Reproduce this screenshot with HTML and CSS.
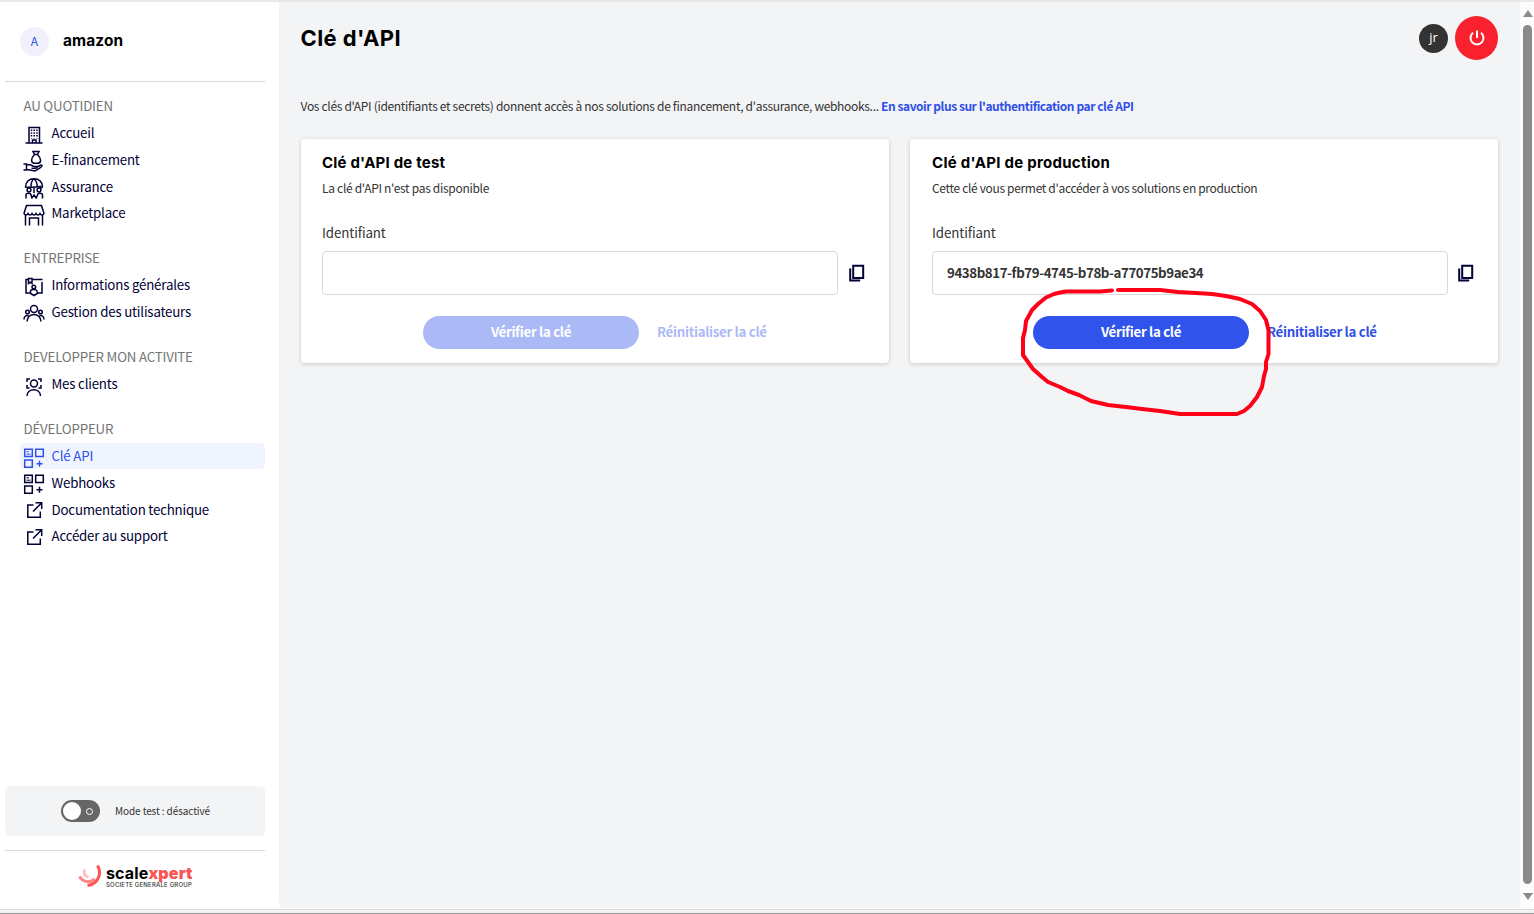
FILE: index.html
```html
<!DOCTYPE html>
<html lang="fr">
<head>
<meta charset="utf-8">
<title>Clé d'API</title>
<link rel="stylesheet" href="styles.css">
</head>
<body>
<svg class="defs" width="0" height="0">
  <symbol id="apps" viewBox="0 0 22 22"><path d="M1.700 2.200h7.600v7.300H1.700zM12.700 2.200h7.600v7.300h-7.600zM1.700 13h7.600v7.300H1.700zM16.500 13.800v6M13.500 16.800h6"/><path stroke-width="1" d="M3.500 4.800h2.500M3.500 7.200h4"/></symbol>
  <symbol id="ext" viewBox="0 0 22 22"><path d="M10.500 5H4.800v12.300h12.500v-5.800M12.500 2.800h6.200V9M18.700 2.800L10 11.500"/></symbol>
  <symbol id="copy" viewBox="0 0 18 20"><path d="M5.200 2.800h10v12.200h-10zM2.200 5.500v12h10"/></symbol>
</svg>
<div class="window">
  <aside class="sidebar">
    <div class="brand"><span class="avatar">A</span><span class="brand-name">amazon</span></div>
    <nav class="menu">
      <section class="group">
        <h3>AU QUOTIDIEN</h3>
        <a class="item"><svg viewBox="0 0 22 22"><path d="M6 19V3.500h10.500V19M2.500 19h17M9.500 19v-3h3.500v3"/><path stroke-dasharray="1.500 1.300" d="M8.500 5.500v9M11.200 5.500v9M14 5.500v9"/></svg><span>Accueil</span></a>
        <a class="item"><svg viewBox="0 0 22 22"><path d="M10 1.500h6l-1.500 3h-3zM11.500 4.500C7.500 8.500 8 13 11 13.200h4c3.500-.2 3.500-4.700-.5-8.700M.5 14h3v6h-3M3.500 14.800h4l3 1.700h3.500c.5 2-2 2-5.500 1.800M14 17l4-2c2 0 1 1.500-1 3l-5 3-8-1.500"/></svg><span>E-financement</span></a>
        <a class="item"><svg viewBox="0 0 22 22"><path d="M2.500 10C2.500 5 6 1.700 11 1.700s8.300 3.300 8.500 7.800c0 1.500-2 1.500-2 0-4 .8-11 .8-15 .5zM8 9.500c0-3.500 1.500-6.500 3-7.500 1.500 1 3 4 3.300 7.500M11 10v6M3 21.500v-3.500c0-2.500 5-2.500 5 0l1 3.500M19.500 21.500v-3.500c0-2.500-5-2.500-5 0l-1.500 3.500M8.500 21.500l2.500-3.500 2.500 3.500"/><circle cx="6" cy="13" r="1.900"/><circle cx="16" cy="13" r="1.900"/></svg><span>Assurance</span></a>
        <a class="item"><svg viewBox="0 0 22 22"><path d="M3.500 1.500h15l2.500 8c-1 2-3 2-4 0-1 2-3 2-4 0-1 2-3 2-4 0-1 2-3 2-4 0-1 2-3 2-4 0zM2.500 11.500v10M19.500 11.500v10M6.500 21.500V14h9v7.500"/></svg><span>Marketplace</span></a>
      </section>
      <section class="group">
        <h3>ENTREPRISE</h3>
        <a class="item"><svg viewBox="0 0 22 22"><path d="M5 3.500H3V17h4l4 2.500L15 17h4V6M9 3.500h10.500M5.500 2.500H9v5L7.200 6.200 5.500 7.500zM7.500 16.500v-1.200c0-2.500 6.500-2.500 6.500 0v1.200"/><circle cx="10.800" cy="11" r="1.800"/></svg><span>Informations générales</span></a>
        <a class="item"><svg viewBox="0 0 22 22"><circle cx="11" cy="7" r="3.500"/><circle cx="4.500" cy="10" r="1.800"/><circle cx="17.500" cy="10" r="1.800"/><path d="M4 19.500c1-9.500 13-9.500 14 0M1 17.500c0-3 2-4.500 4.500-3.700M21 17.500c0-3-2-4.500-4.500-3.700"/></svg><span>Gestion des utilisateurs</span></a>
      </section>
      <section class="group">
        <h3>DEVELOPPER MON ACTIVITE</h3>
        <a class="item"><svg viewBox="0 0 22 22"><circle cx="11" cy="8.500" r="3.500"/><path d="M4 21c0-8.500 13.500-8.500 13.500 0M7 4H4v3M15 4h3v3M4 10v3h2.500M18 10v3h-2.500"/></svg><span>Mes clients</span></a>
      </section>
      <section class="group">
        <h3>DÉVELOPPEUR</h3>
        <a class="item active"><svg><use href="#apps"/></svg><span>Clé API</span></a>
        <a class="item"><svg><use href="#apps"/></svg><span>Webhooks</span></a>
        <a class="item"><svg><use href="#ext"/></svg><span>Documentation technique</span></a>
        <a class="item"><svg><use href="#ext"/></svg><span>Accéder au support</span></a>
      </section>
    </nav>
    <div class="mode"><span class="toggle"><i class="knob"></i><i class="off"></i></span><span class="mode-label">Mode test : désactivé</span></div>
    <div class="logo">
      <svg class="logo-mark" viewBox="0 0 24 24"><path class="m2" d="M1.500 12.500c3 5.500 10 7 15.500 2.500"/><path class="m1" d="M19.500 1.500C24 9 20.500 20.500 9.500 21.500"/><path class="m3" d="M7 5.500c-2 3-.5 7 3.500 7.500"/></svg>
      <div class="logo-text"><span class="wordmark">scale<b>xpert</b></span><span class="tagline">SOCIETE GENERALE GROUP</span></div>
    </div>
  </aside>
  <main class="main">
    <header class="top">
      <h1>Clé d'API</h1>
      <div class="user"><span class="initials">jr</span><span class="power"><svg viewBox="0 0 20 20"><path d="M6 4.800a6.500 6.500 0 1 0 8 0M10 2.500v7.500"/></svg></span></div>
    </header>
    <p class="intro"><span class="intro-text">Vos clés d'API (identifiants et secrets) donnent accès à nos solutions de financement, d'assurance, webhooks...</span> <a>En savoir plus sur l'authentification par clé API</a></p>
    <div class="cards">
      <section class="card">
        <h2>Clé d'API de test</h2>
        <p class="desc">La clé d'API n'est pas disponible</p>
        <label>Identifiant</label>
        <div class="field"><div class="input"></div><svg class="copy"><use href="#copy"/></svg></div>
        <div class="actions disabled"><span class="btn"><span>Vérifier la clé</span></span><span class="link">Réinitialiser la clé</span></div>
      </section>
      <section class="card production">
        <h2>Clé d'API de production</h2>
        <p class="desc">Cette clé vous permet d'accéder à vos solutions en production</p>
        <label>Identifiant</label>
        <div class="field"><div class="input">9438b817-fb79-4745-b78b-a77075b9ae34</div><svg class="copy"><use href="#copy"/></svg></div>
        <div class="actions"><span class="btn"><span>Vérifier la clé</span></span><span class="link">Réinitialiser la clé</span></div>
        <svg class="scribble" viewBox="1010 280 270 145"><path d="M1112 290.500L1100 291.500H1066L1060 292.500L1054 294L1046 297.500L1038 304L1032 310L1026 321L1025 330L1023 338V355L1028 362L1033 369L1042 377L1048 382L1060 387L1068 391L1079 395L1091 401L1108 405L1126 407L1142 409L1160 411L1180 414H1237L1244 411L1250 406L1257 397L1262 387L1264 376L1266 369V362L1268.500 354V330L1266 320L1260 311L1252 304L1240 299L1226 296L1212 294L1196 293L1178 292L1160 290H1118"/></svg>
      </section>
    </div>
  </main>
  <div class="scrollbar"><i class="up"></i><i class="thumb"></i><i class="down"></i></div>
</div>
</body>
</html>
```
FILE: styles.css
```css
* { box-sizing: border-box; }
body { margin: 0; height: 914px; overflow: hidden; background: #f4f4f4; border-bottom: 1px solid #999; font-family: "Noto Sans CJK SC", sans-serif; font-size: 13.300px; color: #333; padding-bottom: 3px; }
h1, h2, h3, p { margin: 0; }
svg { fill: none; stroke: currentColor; flex: none; display: block; }
.defs { position: absolute; }
.window { display: flex; height: 910px; border-top: 2px solid #e9e9ea; border-bottom: 1px solid #dadada; background: #fff; }
.sidebar { width: 279px; padding: 0 14px 0 5px; display: flex; flex-direction: column; }
.brand { height: 80px; border-bottom: 1px solid #d9d9d9; display: flex; align-items: center; gap: 14px; padding-left: 15px; flex: none; }
.avatar { width: 29px; height: 29px; border-radius: 50%; background: #f0f1fb; color: #3050e8; display: grid; place-items: center; font-size: 12px; line-height: 26px; padding-bottom: 2px; }
.brand-name { font: 700 15.400px/20px Inter, sans-serif; color: #000; letter-spacing: .15px; padding-bottom: 1px; }
.menu { display: flex; flex-direction: column; gap: 18.600px; padding: 11px 0 0 15px; letter-spacing: -.2px; }
.group h3 { font-weight: 400; font-size: 13.300px; line-height: 26.800px; height: 26.800px; padding-left: 3.500px; color: #757575; }
.item { display: flex; align-items: center; height: 26.700px; line-height: 26px; gap: 6.500px; padding-left: 3px; color: #010035; border-radius: 5px; }
.item svg { width: 22px; height: 22px; stroke-width: 1.500; margin-top: 3px; }
.item.active { color: #3050e8; background: #f0f4ff; }
.mode { margin-top: auto; height: 50px; background: #f3f4f6; border-radius: 5px; display: flex; align-items: center; padding-left: 56px; gap: 15px; flex: none; }
.toggle { width: 39px; height: 22px; border-radius: 11px; background: #666; display: flex; align-items: center; justify-content: space-between; padding: 0 7px 0 2px; }
.knob { width: 18px; height: 18px; border-radius: 50%; background: #fff; }
.off { width: 7px; height: 7px; border: 1px solid #fff; border-radius: 50%; }
.mode-label { font-size: 10px; letter-spacing: -.1px; padding-bottom: 1px; }
.logo { margin-top: 14px; height: 59px; border-top: 1px solid #d9d9d9; display: flex; gap: 4px; padding: 13px 0 0 73px; flex: none; }
.logo-mark { width: 24px; height: 24px; }
.m1 { stroke: #f95554; stroke-width: 3; }
.m2 { stroke: #fb8987; stroke-width: 3; }
.m3 { stroke: #fdc4c4; stroke-width: 3; }
.logo-text { display: flex; flex-direction: column; font-family: Inter, sans-serif; }
.wordmark { font-weight: 700; font-size: 16px; line-height: 18px; color: #000; letter-spacing: .15px; }
.wordmark b { color: #f95554; }
.tagline { font-size: 6px; line-height: 5px; font-weight: 500; white-space: nowrap; letter-spacing: .2px; }
.main { flex: 1; background: #f3f4f6; border-radius: 0 0 0 5px; padding: 14px 22px 0 21.500px; margin-bottom: 1px; }
.top { display: flex; justify-content: space-between; height: 44px; align-items: center; }
h1 { font: 700 22px/28px Inter, sans-serif; color: #000; letter-spacing: .4px; }
.user { display: flex; align-items: center; gap: 7px; }
.initials { width: 29px; height: 29px; border-radius: 50%; background: #333; color: #fff; display: grid; place-items: center; font: 13px/26px "Open Sans", sans-serif; padding-bottom: 3px; }
.power { width: 43px; height: 44px; border-radius: 50%; background: #f8212d; color: #fff; display: grid; place-items: center; }
.power svg { width: 20px; height: 20px; stroke-width: 2; }
.intro { font-size: 12px; line-height: 18px; margin-top: 37px; white-space: nowrap; letter-spacing: -.315px; }
.intro a { font-weight: 700; color: #3050e8; letter-spacing: -.45px; }
.cards { display: grid; grid-template-columns: 588px 588px; gap: 21px; margin-top: 24px; }
.card { height: 224px; background: #fff; border-radius: 4px; box-shadow: 0 1px 4px rgba(0,0,0,.18); padding: 14px 20px 0 21.500px; position: relative; }
.card.production { padding-left: 22.500px; }
h2 { font: 700 15px/20px Inter, sans-serif; color: #000; letter-spacing: .2px; }
.production h2 { letter-spacing: .28px; }
.desc { font-size: 12px; line-height: 18px; margin-top: 6px; letter-spacing: -.3px; }
.production .desc { letter-spacing: -.33px; }
.card label { display: block; line-height: 20px; margin-top: 26px; letter-spacing: -.1px; }
.field { display: flex; align-items: center; gap: 10px; margin-top: 8px; }
.input { width: 516px; height: 44px; border: 1px solid #d9d9d9; border-radius: 4px; padding-left: 14px; line-height: 42px; font-weight: 700; letter-spacing: -.42px; }
.copy { width: 18px; height: 20px; stroke: #010035; stroke-width: 2; }
.production .copy { margin-left: -1px; }
.actions { display: flex; align-items: center; gap: 18px; margin: 21px 0 0 101px; color: #3050e8; font-weight: 700; letter-spacing: -.32px; }
.btn { width: 216px; height: 33px; border-radius: 17px; background: #3054eb; color: #fff; display: grid; place-items: center; line-height: 31px; padding-bottom: 2px; }
.link { white-space: nowrap; line-height: 31px; padding-bottom: 2px; }
.disabled { opacity: .4; }
.scribble { position: absolute; left: 100px; top: 141px; width: 270px; height: 145px; stroke: #ff0019; stroke-width: 4; stroke-linejoin: round; stroke-linecap: round; }
.scrollbar { width: 14px; background: #fcfcfc; border-radius: 0 8px 8px 0; display: flex; flex-direction: column; align-items: center; padding: 8px 0 9px 1px; flex: none; }
.up { border: 5px solid transparent; border-top: 0; border-bottom: 7px solid #8a8a8a; }
.thumb { width: 9px; flex: 1; margin: 8px 0 9px; background: #8a8a8a; border-radius: 5px; }
.down { border: 5px solid transparent; border-bottom: 0; border-top: 7px solid #8a8a8a; }
```
